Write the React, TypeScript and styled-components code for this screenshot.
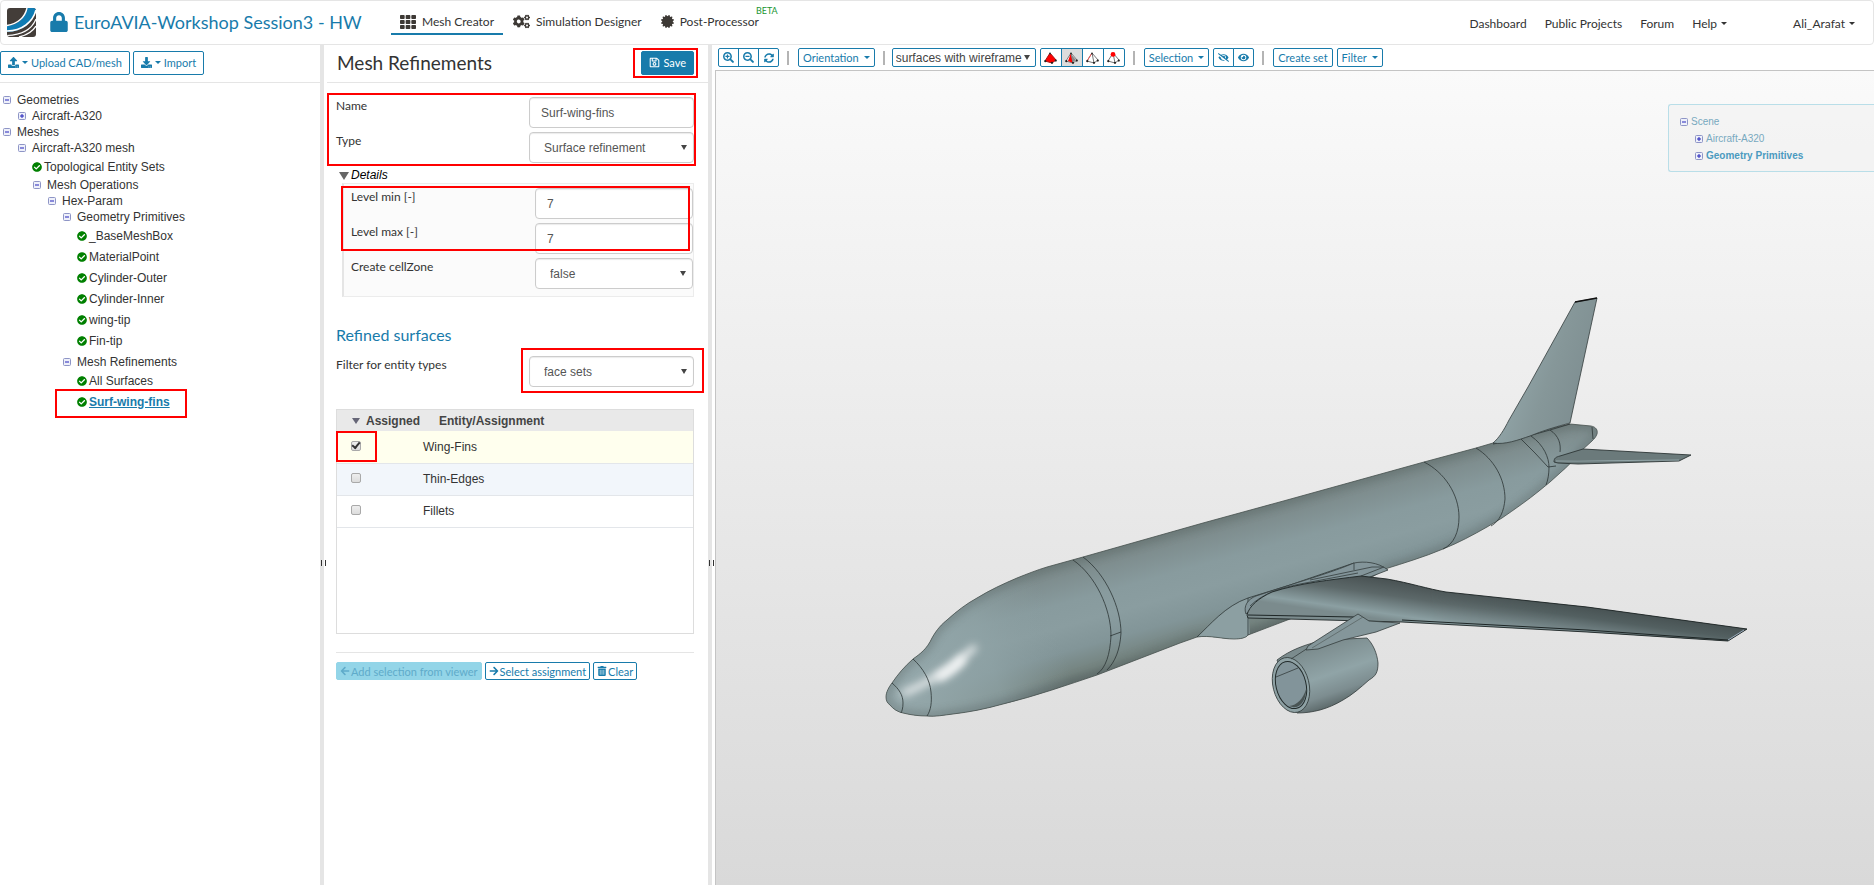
import React, { useState } from 'react';
import styled, { createGlobalStyle, css } from 'styled-components';
import {
  FaArrowLeft,
  FaArrowRight,
  FaCertificate,
  FaCheckCircle,
  FaCogs,
  FaDownload,
  FaEye,
  FaEyeSlash,
  FaLock,
  FaRegSave,
  FaSearchMinus,
  FaSearchPlus,
  FaSyncAlt,
  FaTh,
  FaTrashAlt,
  FaUpload,
} from 'react-icons/fa';

const colors = {
  blue: '#187bab',
  text: '#333333',
  line: '#e5e5e5',
  red: '#ff0000',
};

const lato = "Lato, 'Liberation Sans', sans-serif";
const arial = "'Liberation Sans', Arial, sans-serif";

const GlobalStyle = createGlobalStyle`
  * {
    box-sizing: border-box;
  }

  body {
    margin: 0;
    background: white;
    color: ${colors.text};
    font-family: ${lato};
    font-size: 12px;
    overflow: hidden;
  }

  button, input, select {
    font: inherit;
    color: inherit;
    margin: 0;
  }

  svg {
    display: block;
  }
`;

const Page = styled.div`
  display: flex;
  flex-direction: column;
  min-height: 100vh;
`;

/* header */

const Header = styled.header`
  display: flex;
  align-items: center;
  height: 45px;
  padding: 0 18px 0 6px;
  border: 1px solid ${colors.line};
  border-radius: 4px;
`;

const Project = styled.h1`
  display: flex;
  align-items: center;
  width: 342px;
  margin: 0 0 0 13px;
  padding-bottom: 2px;
  gap: 5px;
  color: ${colors.blue};
  font-size: 18px;
  font-weight: 400;
  white-space: nowrap;
`;

const Tabs = styled.nav`
  display: flex;
  gap: 1px;
`;

const Tab = styled.a<{ $active?: boolean }>`
  display: flex;
  position: relative;
  align-items: center;
  gap: 6px;
  height: 24px;
  padding: 0 9px;
  color: ${colors.text};
  text-decoration: none;
  border-bottom: 2px solid ${props => props.$active ? colors.blue : 'transparent'};

  svg {
    color: #3d3935;
  }
`;

const Beta = styled.sup`
  position: absolute;
  top: -5px;
  left: 100%;
  margin-left: -12px;
  color: #1a9632;
  font-size: 9px;
  line-height: 10px;
`;

const UserLinks = styled.nav`
  display: flex;
  align-items: center;
  gap: 18px;
  margin-left: auto;
  padding-top: 2px;
`;

const HeaderLink = styled.a<{ $user?: boolean }>`
  display: flex;
  align-items: center;
  gap: 4px;
  margin-left: ${props => props.$user ? '48px' : '0'};
  color: ${colors.text};
  text-decoration: none;
`;

const Caret = styled.span`
  display: inline-block;
  border: 3px solid transparent;
  border-top-color: currentColor;
  border-bottom: 0;
`;

/* workspace */

const Workspace = styled.main`
  display: grid;
  flex: 1;
  grid-template-columns: 320px 4px 384px 4px minmax(0, 1fr);
`;

const Splitter = styled.div`
  padding: 515px 0 0 1px;
  background: ${colors.line};

  &::before {
    content: '';
    display: block;
    width: 3px;
    height: 6px;
    border: solid #333;
    border-width: 0 1px;
  }
`;

const Panel = styled.section`
  min-width: 0;
`;

const PanelBar = styled.div<{ $indent?: boolean }>`
  display: flex;
  align-items: center;
  gap: 3px;
  height: 38px;
  margin-left: ${props => props.$indent ? '3px' : '0'};
  padding: ${props => props.$indent ? '0 14px 2px 10px' : '0 0 2px'};
  border-bottom: 1px solid ${colors.line};
`;

const Button = styled.button<{ $primary?: boolean }>`
  display: flex;
  align-items: center;
  gap: 3px;
  height: 24px;
  padding: 0 7px;
  white-space: nowrap;
  border: 1px solid ${colors.blue};
  border-radius: 2px;
  background: ${props => props.$primary ? colors.blue : 'white'};
  color: ${props => props.$primary ? 'white' : colors.blue};
  font-size: 11px;
  cursor: pointer;
`;

const SmallButton = styled(Button)`
  height: 18px;
  padding: 0 3px;
  gap: 1px;

  &:disabled {
    border-color: #93d5e8;
    background: #93d5e8;
    color: #5fabca;
    cursor: default;
  }
`;

const Callout = styled.div<{ $inset: string }>`
  position: relative;

  &::after {
    content: '';
    position: absolute;
    inset: ${props => props.$inset};
    border: 2px solid ${colors.red};
    pointer-events: none;
  }
`;

/* tree */

const TreeList = styled.ul<{ $leaves?: boolean }>`
  margin: 0;
  padding: ${props => props.$leaves ? '0 0 3px 15px' : '0 0 0 15px'};
  list-style: none;
`;

const Tree = styled(TreeList)`
  padding: 9px 0 0 2px;
  font-family: ${arial};
  font-size: 12px;
`;

const Folder = styled.div`
  display: flex;
  align-items: center;
  gap: 5px;
  height: 16px;
`;

const Leaf = styled.a<{ $selected?: boolean }>`
  display: flex;
  align-items: center;
  gap: 2px;
  height: 21px;
  color: ${props => props.$selected ? colors.blue : colors.text};
  font-weight: ${props => props.$selected ? 700 : 400};
  text-decoration: ${props => props.$selected ? 'underline' : 'none'};

  svg {
    color: #008000;
  }
`;

const Toggle = styled.button`
  display: flex;
  width: 10px;
  height: 10px;
  padding: 0;
  border: 0;
  background: none;
`;

/* form */

const PanelTitle = styled.h2`
  flex: 1;
  margin: 0;
  font-size: 19px;
  font-weight: 400;
`;

const Form = styled.form`
  padding: 14px 14px 0 12px;
`;

const Rows = styled.div`
  display: grid;
  gap: 4px;
`;

const Row = styled.div<{ $control?: number }>`
  display: grid;
  grid-template-columns: 1fr ${props => props.$control || 165}px;
`;

const Label = styled.label`
  height: 18px;
  line-height: 18px;
`;

const control = css`
  width: 100%;
  height: 31px;
  border: 1px solid #cccccc;
  border-radius: 4px;
  background: white;
  box-shadow: inset 0 1px 1px rgba(0, 0, 0, 0.08);
  color: #555;
  font-family: ${arial};
  font-size: 12px;
`;

const Input = styled.input`
  ${control}
  padding: 1px 11px 0;
`;

const SelectBox = styled.div`
  position: relative;

  &::after {
    content: '';
    position: absolute;
    top: 50%;
    right: 7px;
    margin-top: -3px;
    border: 3px solid transparent;
    border-top: 5px solid #444;
    border-bottom: 0;
    pointer-events: none;
  }
`;

const Select = styled.select`
  ${control}
  appearance: none;
  padding: 1px 20px 0 14px;
`;

const Details = styled.details`
  margin-top: 4px;
`;

const Summary = styled.summary`
  display: flex;
  align-items: center;
  gap: 2px;
  height: 16px;
  padding-left: 3px;
  color: black;
  font-family: ${arial};
  font-size: 12px;
  font-style: italic;
  list-style: none;

  &::before {
    content: '';
    border: 5px solid transparent;
    border-top: 8px solid #666;
    border-bottom: 0;
    margin-top: 2px;
  }
`;

const DetailsBody = styled.div`
  display: grid;
  gap: 4px;
  margin-left: 6px;
  padding: 4px 0 7px 7px;
  border: 1px solid #ececec;
  border-left: 2px solid ${colors.line};
  background: #fbfbfb;
`;

const SubTitle = styled.h3`
  margin: 27px 0 11px;
  color: ${colors.blue};
  font-size: 16px;
  font-weight: 400;
  line-height: 21px;
`;

const TableBox = styled.div`
  height: 225px;
  margin: 22px 0 18px;
  border: 1px solid #dddddd;
`;

const Table = styled.table`
  width: 100%;
  border-collapse: collapse;
  table-layout: fixed;
  font-family: ${arial};
  font-size: 12px;
  text-align: left;

  th {
    height: 21px;
    padding: 0 0 0 16px;
    background: #e9e9e9;
    color: #444;
  }

  td {
    height: 32px;
    padding: 0;
    border-bottom: 1px solid #e3e6ea;
  }
`;

const AssignedHead = styled.span`
  display: flex;
  align-items: center;
  gap: 6px;
  margin-left: -1px;

  &::before {
    content: '';
    border: 4px solid transparent;
    border-top: 6px solid #667;
    border-bottom: 0;
  }
`;

const EntityRow = styled.tr<{ $bg: string }>`
  background: ${props => props.$bg};
`;

const TickCell = styled.div`
  display: flex;
  align-items: center;
  height: 31px;
  padding: 0 0 2px 14px;
`;

const Tick = styled.input`
  appearance: none;
  display: grid;
  place-items: center;
  width: 10px;
  height: 10px;
  border: 1px solid #a9a9a9;
  border-radius: 2px;
  background: linear-gradient(#eeeeee, #dcdcdc);

  &:checked::before {
    content: '';
    width: 6px;
    height: 3px;
    margin-bottom: 2px;
    border: solid #333;
    border-width: 0 0 2px 2px;
    transform: rotate(-50deg);
  }
`;

const Actions = styled.div`
  display: flex;
  gap: 3px;
  padding-top: 9px;
  border-top: 1px solid ${colors.line};
`;

/* viewer */

const ViewerPanel = styled.section`
  display: flex;
  flex-direction: column;
  min-width: 0;
  padding-left: 3px;
`;

const Toolbar = styled.div`
  display: flex;
  align-items: center;
  gap: 8px;
  height: 25px;
  padding: 0 3px;
`;

const ToolButton = styled(Button)`
  height: 19px;
  padding: 0 4px;
  gap: 5px;
`;

const ToolGroup = styled.div<{ $tight?: boolean }>`
  display: flex;
  margin-right: ${props => props.$tight ? '-4px' : '0'};
`;

const IconButton = styled(Button)<{ $pressed?: boolean }>`
  justify-content: center;
  width: 21px;
  height: 19px;
  padding: 0;
  border-radius: 0;
  background: ${props => props.$pressed ? '#dcdcdc' : 'white'};

  & + & {
    margin-left: -1px;
  }

  &:first-child {
    border-radius: 2px 0 0 2px;
  }

  &:last-child {
    border-radius: 0 2px 2px 0;
  }
`;

const PickButton = styled(IconButton)`
  width: 22px;
`;

const Divider = styled.span`
  width: 2px;
  height: 14px;
  margin: 0 1px 0 0;
  background: #b4b4b4;
`;

const RenderModeBox = styled(SelectBox)`
  width: 144px;
  margin: 0 -4px 0 -2px;

  &::after {
    right: 6px;
  }
`;

const RenderMode = styled.select`
  display: block;
  appearance: none;
  width: 100%;
  height: 19px;
  padding: 0 3px;
  border: 1px solid ${colors.blue};
  border-radius: 2px;
  background: white;
  color: #444;
  font-family: ${arial};
  font-size: 12px;
`;

const Canvas = styled.div`
  position: relative;
  flex: 1;
  overflow: hidden;
  border: solid #c4c4c4;
  border-width: 1px 0 0 1px;
  background: linear-gradient(#fafafa, #d9d9d9);

  > svg {
    position: absolute;
    inset: 0;
    width: 100%;
    height: 100%;
  }
`;

const SceneTree = styled.div`
  position: absolute;
  top: 33px;
  right: 0;
  width: 206px;
  padding: 8px 0 7px 10px;
  border: 1px solid #b9dee8;
  border-right: 0;
  border-radius: 3px 0 0 3px;
  background: rgba(240, 240, 240, 0.5);
  color: #78a9bf;
  font-family: ${arial};
  font-size: 10px;
`;

const SceneRow = styled.div<{ $level?: number; $bold?: boolean }>`
  display: flex;
  align-items: center;
  gap: 2px;
  height: 17px;
  padding-left: ${props => (props.$level || 0) * 15}px;
  color: ${props => props.$bold ? '#4b9abf' : 'inherit'};
  font-weight: ${props => props.$bold ? 700 : 400};
`;

const ExpandIcon = ({ open }: { open?: boolean }) => (
  <svg width="10" height="10" viewBox="0 0 10 10">
    <rect x="1.5" y="1.5" width="7" height="7" rx="1" fill="#eef0fa" stroke="#8e95c6" />
    <path d={open ? 'M3 5h4' : 'M3 5h4M5 3v4'} stroke="#2222bb" />
  </svg>
);

const Logo = () => (
  <svg width="29" height="29" viewBox="0 0 29 29">
    <clipPath id="logo">
      <rect width="29" height="29" rx="3" />
    </clipPath>
    <g clipPath="url(#logo)">
      <rect width="29" height="29" fill="#433d39" />
      <path d="M0 18C11 17 18 10 20 0H29V2C26 14 16 24 0 24Z" fill="#0f7cb4" />
      <g fill="none" stroke="white" strokeWidth="1.4">
        <path d="M0 17.5C11 16 18 9 20 0" />
        <path d="M0 23C15 23 26 14 29 2" strokeWidth="1.6" />
        <path d="M0 27.5C15 27 25 21 29 11" strokeWidth="1.2" />
        <path d="M12 29C20 27 26 23 29 18" />
      </g>
    </g>
  </svg>
);

/* tetrahedron with the picked part (body, face, edge, vertex) in red */
const PickIcon = ({ kind }: { kind: string }) => (
  <svg width="13" height="12" viewBox="0 0 13 12">
    <path d="M6 1L1 9L8 11L12 8Z" fill={kind === 'body' ? 'red' : 'white'} stroke={kind === 'body' ? '#a11' : '#777'} />
    {kind === 'face' && <path d="M6 1L8 11L3 9Z" fill="red" />}
    {kind !== 'body' && <path d="M6 1L8 11" stroke="#777" />}
    {kind === 'face' && <path d="M6 2L11 8L8 10Z" fill="#888" />}
    {kind === 'edge' && <path d="M6 1L1 9" stroke="#e55" />}
    <circle cx="1.3" cy="9.2" r="1.1" fill="#222" />
    <circle cx="8" cy="10.8" r="1.1" fill="#222" />
    <circle cx="11.8" cy="8.6" r="1.1" fill="#222" />
    <circle cx="6" cy={kind === 'vertex' ? 2.4 : 1.4} r={kind === 'vertex' ? 2.4 : 1} fill={kind === 'vertex' ? 'red' : '#333'} />
  </svg>
);

const fuselage =
  'M886 697C886 692 889 687 892 683C898 674 905 666 913 659C920 654 927 649 932 638C937 629 942 624 947 620C957 611 966 604 977 598C990 590 1003 584 1017 578C1027 574 1037 570 1047 567L1083 557L1203 523L1287 500L1424 462L1476 448L1493 443L1535 432L1570 424L1591 426C1596 427 1598 430 1597 434C1596 437 1594 439 1592 441L1581 451C1575 459 1567 467 1560 473L1550 482L1539 491C1528 500 1515 509 1502 518L1487 527C1473 535 1458 543 1443 549C1424 557 1404 563 1385 569L1372 577L1340 600L1290 619L1248 635C1246 638 1240 639 1234 639C1222 639 1210 635 1197 637L1180 643L1097 675C1067 685 1036 696 1003 704C985 709 970 712 953 714C944 715 935 717 927 716C919 716 911 715 903 713C898 712 893 709 890 705C887 703 886 700 886 697Z';

const wing =
  'M1247 615C1249 606 1259 598 1272 592C1300 583 1330 580 1361 576L1387 579C1410 583 1428 589 1446 592L1587 607L1747 629L1728 641L1587 632L1402 622L1248 618Z';

const Aircraft = () => (
  <svg viewBox="716 71 1158 814" preserveAspectRatio="xMidYMid meet">
    <defs>
      <linearGradient id="body" gradientUnits="userSpaceOnUse" x1="1083" y1="557" x2="1116" y2="676">
        <stop offset="0" stopColor="#768483" />
        <stop offset="0.1" stopColor="#7e8d8e" />
        <stop offset="0.32" stopColor="#889b9e" />
        <stop offset="0.5" stopColor="#8a9da0" />
        <stop offset="0.7" stopColor="#829598" />
        <stop offset="0.88" stopColor="#74837f" />
        <stop offset="1" stopColor="#5c6867" />
      </linearGradient>
      <linearGradient id="nose" gradientUnits="userSpaceOnUse" x1="886" y1="700" x2="1060" y2="640">
        <stop offset="0" stopColor="#97aaad" />
        <stop offset="0.6" stopColor="#90a4a7" stopOpacity="0.7" />
        <stop offset="1" stopColor="#8a9da0" stopOpacity="0" />
      </linearGradient>
      <linearGradient id="fin" gradientUnits="userSpaceOnUse" x1="1520" y1="370" x2="1590" y2="395">
        <stop offset="0" stopColor="#8fa2a5" />
        <stop offset="0.4" stopColor="#869799" />
        <stop offset="1" stopColor="#7d8d90" />
      </linearGradient>
      <linearGradient id="wing" gradientUnits="userSpaceOnUse" x1="1420" y1="583" x2="1414" y2="624">
        <stop offset="0" stopColor="#485152" />
        <stop offset="0.4" stopColor="#5c6869" />
        <stop offset="0.85" stopColor="#8b9fa2" />
        <stop offset="1" stopColor="#7b8b8d" />
      </linearGradient>
      <linearGradient id="outerWing" gradientUnits="userSpaceOnUse" x1="1590" y1="605" x2="1586" y2="634">
        <stop offset="0" stopColor="#465051" />
        <stop offset="0.45" stopColor="#536061" />
        <stop offset="1" stopColor="#7b8c8f" />
      </linearGradient>
      <linearGradient id="wingFade" gradientUnits="userSpaceOnUse" x1="1430" y1="0" x2="1560" y2="0">
        <stop offset="0" stopColor="white" stopOpacity="0" />
        <stop offset="1" stopColor="white" />
      </linearGradient>
      <mask id="outerMask" maskUnits="userSpaceOnUse" x="1200" y="550" width="600" height="120">
        <rect x="1200" y="550" width="600" height="120" fill="url(#wingFade)" />
      </mask>
      <linearGradient id="engine" gradientUnits="userSpaceOnUse" x1="1325" y1="643" x2="1345" y2="702">
        <stop offset="0" stopColor="#7b8b8d" />
        <stop offset="0.5" stopColor="#90a4a7" />
        <stop offset="0.8" stopColor="#7d8d90" />
        <stop offset="1" stopColor="#5d6a6b" />
      </linearGradient>
      <filter id="soft" x="-30%" y="-30%" width="160%" height="160%">
        <feGaussianBlur stdDeviation="4" />
      </filter>
      <filter id="glow" x="-60%" y="-120%" width="220%" height="340%">
        <feGaussianBlur stdDeviation="4" />
      </filter>
      <clipPath id="hull">
        <path d={fuselage} />
      </clipPath>
    </defs>

    <path d={fuselage} fill="url(#body)" />
    <g clipPath="url(#hull)">
      <rect x="880" y="550" width="190" height="180" fill="url(#nose)" />
      <path d={fuselage} fill="none" stroke="#556160" strokeWidth="8" opacity="0.4" filter="url(#soft)" />
      <path d="M904 693C926 685 950 668 974 648" fill="none" stroke="white" strokeWidth="5" strokeLinecap="round" filter="url(#glow)" />
      <path d="M940 677C948 673 956 667 962 660" fill="none" stroke="white" strokeWidth="8" strokeLinecap="round" filter="url(#glow)" />
      <path d="M1197 637C1210 625 1225 606 1248 598L1250 640H1200Z" fill="#8c9fa2" />
    </g>
    <path d={fuselage} fill="none" stroke="#48524f" strokeWidth="0.8" />

    <g fill="none" stroke="#2c3535" strokeWidth="0.8">
      <path d="M892 683C899 689 903 695 903 703C903 708 902 711 901 713" />
      <path d="M913 659C923 668 930 680 931 692C932 702 931 710 927 716" />
      <path d="M1073 560C1095 575 1111 608 1111 636C1110 654 1106 668 1097 674" />
      <path d="M1083 557C1106 574 1121 608 1121 633C1120 650 1115 662 1107 670M1110 636L1121 632" />
      <path d="M1424 462C1444 472 1459 494 1459 517C1459 532 1454 544 1443 549" />
      <path d="M1476 448C1494 459 1505 479 1505 499C1504 511 1500 521 1491 526" />
      <path d="M1531 436C1544 445 1549 458 1549 467C1549 474 1548 480 1546 485" />
      <path d="M1550 430C1559 436 1561 444 1560 452M1520 438L1535 453L1548 467L1556 466" />
      <path d="M1592 427L1593 439M1493 444L1510 441L1550 430L1570 424" />
      <path d="M1197 637C1210 625 1225 606 1248 598L1290 585L1354 563M1248 598V604M1248 616V635" />
    </g>

    <path d="M1493 443C1499 438 1504 430 1509 420L1528 387L1575 302L1597 298L1570 423C1555 427 1542 431 1530 436C1518 440 1505 445 1493 443Z" fill="url(#fin)" stroke="#333c3c" strokeWidth="0.8" />
    <path d="M1575 302L1597 298" stroke="#111" strokeWidth="1.4" />

    <path d="M1554 462C1554 458 1556 457 1560 456L1583 449L1691 455L1679 461L1578 464L1558 463Z" fill="#6b7a7b" stroke="#2c3535" strokeWidth="0.9" />
    <path d="M1556 461L1578 461L1679 460" stroke="#93a6a9" />

    <path d="M1246 614C1243 606 1248 599 1256 596L1290 585C1315 577 1335 571 1354 563C1364 561 1378 562 1388 570L1370 577L1362 580L1300 590L1262 600Z" fill="#83959a" stroke="#333c3c" strokeWidth="0.8" />
    <path d="M1310 580L1372 567L1382 567M1354 563V570M1361 576L1384 567M1250 606C1262 594 1280 588 1300 584L1358 573" fill="none" stroke="#333c3c" strokeWidth="0.8" />

    <path d={wing} fill="url(#wing)" />
    <path d={wing} fill="url(#outerWing)" mask="url(#outerMask)" />
    <path d={wing} fill="none" stroke="#1e2626" strokeWidth="0.9" />
    <path d="M1248 615L1354 617M1402 620L1587 630L1728 640" fill="none" stroke="#1e2626" />
    <path d="M1744 630L1728 640" stroke="#9ab" />

    <path d="M1277 660C1290 650 1306 644 1325 640L1367 638C1373 644 1377 653 1378 663C1378 672 1376 676 1369 680C1360 688 1352 695 1343 700C1328 709 1313 713 1297 713Z" fill="url(#engine)" stroke="#333c3c" strokeWidth="0.8" />
    <g transform="rotate(-14 1291 685)">
      <ellipse cx="1291" cy="685" rx="18" ry="28" fill="#8fa2a5" stroke="#333c3c" strokeWidth="0.8" />
      <ellipse cx="1291" cy="685" rx="15" ry="24" fill="#82949a" stroke="#222b2b" />
      <path d="M1305 692C1301 706 1292 711 1284 705C1292 706 1300 701 1305 692Z" fill="#495454" />
    </g>
    <path d="M1276 677L1298 668M1291 659L1308 648" stroke="#333c3c" strokeWidth="0.8" />
    <path d="M1358 614L1369 621L1400 623L1376 632L1343 640L1318 649L1306 650L1308 646Z" fill="#84969a" stroke="#333c3c" strokeWidth="0.8" />
    <path d="M1363 617L1312 648" stroke="#5a6666" strokeWidth="0.8" />
  </svg>
);

interface TreeNode {
  name: string;
  leaf?: boolean;
  closed?: boolean;
  selected?: boolean;
  children?: TreeNode[];
}

const projectTree: TreeNode[] = [
  { name: 'Geometries', children: [{ name: 'Aircraft-A320', closed: true }] },
  {
    name: 'Meshes',
    children: [
      {
        name: 'Aircraft-A320 mesh',
        children: [
          { name: 'Topological Entity Sets', leaf: true },
          {
            name: 'Mesh Operations',
            children: [
              {
                name: 'Hex-Param',
                children: [
                  {
                    name: 'Geometry Primitives',
                    children: [
                      { name: '_BaseMeshBox', leaf: true },
                      { name: 'MaterialPoint', leaf: true },
                      { name: 'Cylinder-Outer', leaf: true },
                      { name: 'Cylinder-Inner', leaf: true },
                      { name: 'wing-tip', leaf: true },
                      { name: 'Fin-tip', leaf: true },
                    ],
                  },
                  {
                    name: 'Mesh Refinements',
                    children: [
                      { name: 'All Surfaces', leaf: true },
                      { name: 'Surf-wing-fins', leaf: true, selected: true },
                    ],
                  },
                ],
              },
            ],
          },
        ],
      },
    ],
  },
];

const TreeItem = ({ node }: { node: TreeNode }) => {
  const leaf = (
    <Leaf href="#" $selected={node.selected}>
      <FaCheckCircle size={10} />
      <span>{node.name}</span>
    </Leaf>
  );

  if (node.leaf) {
    return <li>{node.selected ? <Callout $inset="-2px 133px -6px -22px">{leaf}</Callout> : leaf}</li>;
  }

  return (
    <li>
      <Folder>
        <Toggle type="button" aria-label={node.name}>
          <ExpandIcon open={!node.closed} />
        </Toggle>
        {node.name}
      </Folder>
      {node.children && (
        <TreeList $leaves={node.children.every(child => child.leaf)}>
          {node.children.map(child => (
            <TreeItem key={child.name} node={child} />
          ))}
        </TreeList>
      )}
    </li>
  );
};

const App = () => {
  const [name, setName] = useState('Surf-wing-fins');
  const [levelMin, setLevelMin] = useState('7');
  const [levelMax, setLevelMax] = useState('7');
  const [assigned, setAssigned] = useState<string[]>(['Wing-Fins']);

  const entities = [
    { name: 'Wing-Fins', bg: '#ffffee' },
    { name: 'Thin-Edges', bg: '#f2f6fb' },
    { name: 'Fillets', bg: 'white' },
  ];

  const toggle = (entity: string) => {
    setAssigned(assigned.includes(entity) ? assigned.filter(e => e !== entity) : [...assigned, entity]);
  };

  const renderTick = (entity: string) => (
    <TickCell>
      <Tick
        type="checkbox"
        aria-label={entity}
        checked={assigned.includes(entity)}
        onChange={() => toggle(entity)}
      />
    </TickCell>
  );

  return (
    <Page>
      <GlobalStyle />
      <Header>
        <Logo />
        <Project>
          <FaLock size={20} />
          EuroAVIA-Workshop Session3 - HW
        </Project>
        <Tabs>
          <Tab href="#" $active>
            <FaTh size={16} />
            Mesh Creator
          </Tab>
          <Tab href="#">
            <FaCogs size={17} />
            Simulation Designer
          </Tab>
          <Tab href="#">
            <FaCertificate size={13} />
            Post-Processor
            <Beta>BETA</Beta>
          </Tab>
        </Tabs>
        <UserLinks>
          <HeaderLink href="#">Dashboard</HeaderLink>
          <HeaderLink href="#">Public Projects</HeaderLink>
          <HeaderLink href="#">Forum</HeaderLink>
          <HeaderLink href="#">Help <Caret /></HeaderLink>
          <HeaderLink href="#" $user>Ali_Arafat <Caret /></HeaderLink>
        </UserLinks>
      </Header>

      <Workspace>
        <Panel>
          <PanelBar>
            <Button type="button">
              <FaUpload size={11} />
              <Caret />
              Upload CAD/mesh
            </Button>
            <Button type="button">
              <FaDownload size={11} />
              <Caret />
              Import
            </Button>
          </PanelBar>
          <Tree>
            {projectTree.map(node => (
              <TreeItem key={node.name} node={node} />
            ))}
          </Tree>
        </Panel>

        <Splitter />

        <Panel>
          <PanelBar $indent>
            <PanelTitle>Mesh Refinements</PanelTitle>
            <Callout $inset="-3px -4px -3px -8px">
              <Button type="submit" form="refinement" $primary>
                <FaRegSave size={11} />
                Save
              </Button>
            </Callout>
          </PanelBar>
          <Form id="refinement" onSubmit={e => e.preventDefault()}>
            <Callout $inset="-4px -2px -3px -9px">
              <Rows>
                <Row>
                  <Label htmlFor="name">Name</Label>
                  <Input id="name" value={name} onChange={e => setName(e.target.value)} />
                </Row>
                <Row>
                  <Label htmlFor="type">Type</Label>
                  <SelectBox>
                    <Select id="type">
                      <option>Surface refinement</option>
                    </Select>
                  </SelectBox>
                </Row>
              </Rows>
            </Callout>

            <Details open>
              <Summary>Details</Summary>
              <DetailsBody>
                <Callout $inset="-2px 3px 3px -10px">
                  <Rows>
                    <Row $control={158}>
                      <Label htmlFor="levelMin">Level min [-]</Label>
                      <Input id="levelMin" value={levelMin} onChange={e => setLevelMin(e.target.value)} />
                    </Row>
                    <Row $control={158}>
                      <Label htmlFor="levelMax">Level max [-]</Label>
                      <Input id="levelMax" value={levelMax} onChange={e => setLevelMax(e.target.value)} />
                    </Row>
                  </Rows>
                </Callout>
                <Row $control={158}>
                  <Label htmlFor="cellZone">Create cellZone</Label>
                  <SelectBox>
                    <Select id="cellZone">
                      <option>false</option>
                    </Select>
                  </SelectBox>
                </Row>
              </DetailsBody>
            </Details>

            <SubTitle>Refined surfaces</SubTitle>
            <Row>
              <Label htmlFor="filter">Filter for entity types</Label>
              <Callout $inset="-8px -10px -6px -8px">
                <SelectBox>
                  <Select id="filter">
                    <option>face sets</option>
                  </Select>
                </SelectBox>
              </Callout>
            </Row>

            <TableBox>
              <Table>
                <colgroup>
                  <col width="86" />
                  <col />
                </colgroup>
                <thead>
                  <tr>
                    <th><AssignedHead>Assigned</AssignedHead></th>
                    <th>Entity/Assignment</th>
                  </tr>
                </thead>
                <tbody>
                  {entities.map(entity => (
                    <EntityRow key={entity.name} $bg={entity.bg}>
                      <td>
                        {entity.name === 'Wing-Fins' ? (
                          <Callout $inset="0 46px 0 -1px">{renderTick(entity.name)}</Callout>
                        ) : (
                          renderTick(entity.name)
                        )}
                      </td>
                      <td>{entity.name}</td>
                    </EntityRow>
                  ))}
                </tbody>
              </Table>
            </TableBox>

            <Actions>
              <SmallButton type="button" disabled>
                <FaArrowLeft size={10} />
                Add selection from viewer
              </SmallButton>
              <SmallButton type="button">
                <FaArrowRight size={10} />
                Select assignment
              </SmallButton>
              <SmallButton type="button">
                <FaTrashAlt size={10} />
                Clear
              </SmallButton>
            </Actions>
          </Form>
        </Panel>

        <Splitter />

        <ViewerPanel>
          <Toolbar>
            <ToolGroup>
              <IconButton type="button" aria-label="Zoom in"><FaSearchPlus size={11} /></IconButton>
              <IconButton type="button" aria-label="Zoom out"><FaSearchMinus size={11} /></IconButton>
              <IconButton type="button" aria-label="Reset view"><FaSyncAlt size={10} /></IconButton>
            </ToolGroup>
            <Divider />
            <ToolButton type="button">Orientation <Caret /></ToolButton>
            <Divider />
            <RenderModeBox>
              <RenderMode aria-label="Render mode">
                <option>surfaces with wireframe</option>
              </RenderMode>
            </RenderModeBox>
            <ToolGroup>
              <PickButton type="button" aria-label="Pick bodies"><PickIcon kind="body" /></PickButton>
              <PickButton type="button" aria-label="Pick faces" $pressed><PickIcon kind="face" /></PickButton>
              <PickButton type="button" aria-label="Pick edges"><PickIcon kind="edge" /></PickButton>
              <PickButton type="button" aria-label="Pick vertices"><PickIcon kind="vertex" /></PickButton>
            </ToolGroup>
            <Divider />
            <ToolGroup $tight>
              <ToolButton type="button">Selection <Caret /></ToolButton>
            </ToolGroup>
            <ToolGroup>
              <IconButton type="button" aria-label="Hide"><FaEyeSlash size={11} /></IconButton>
              <IconButton type="button" aria-label="Show"><FaEye size={11} /></IconButton>
            </ToolGroup>
            <Divider />
            <ToolGroup $tight>
              <ToolButton type="button">Create set</ToolButton>
            </ToolGroup>
            <ToolButton type="button">Filter <Caret /></ToolButton>
          </Toolbar>
          <Canvas>
            <Aircraft />
            <SceneTree>
              <SceneRow><ExpandIcon open />Scene</SceneRow>
              <SceneRow $level={1}><ExpandIcon />Aircraft-A320</SceneRow>
              <SceneRow $level={1} $bold><ExpandIcon />Geometry Primitives</SceneRow>
            </SceneTree>
          </Canvas>
        </ViewerPanel>
      </Workspace>
    </Page>
  );
};

export default App;
